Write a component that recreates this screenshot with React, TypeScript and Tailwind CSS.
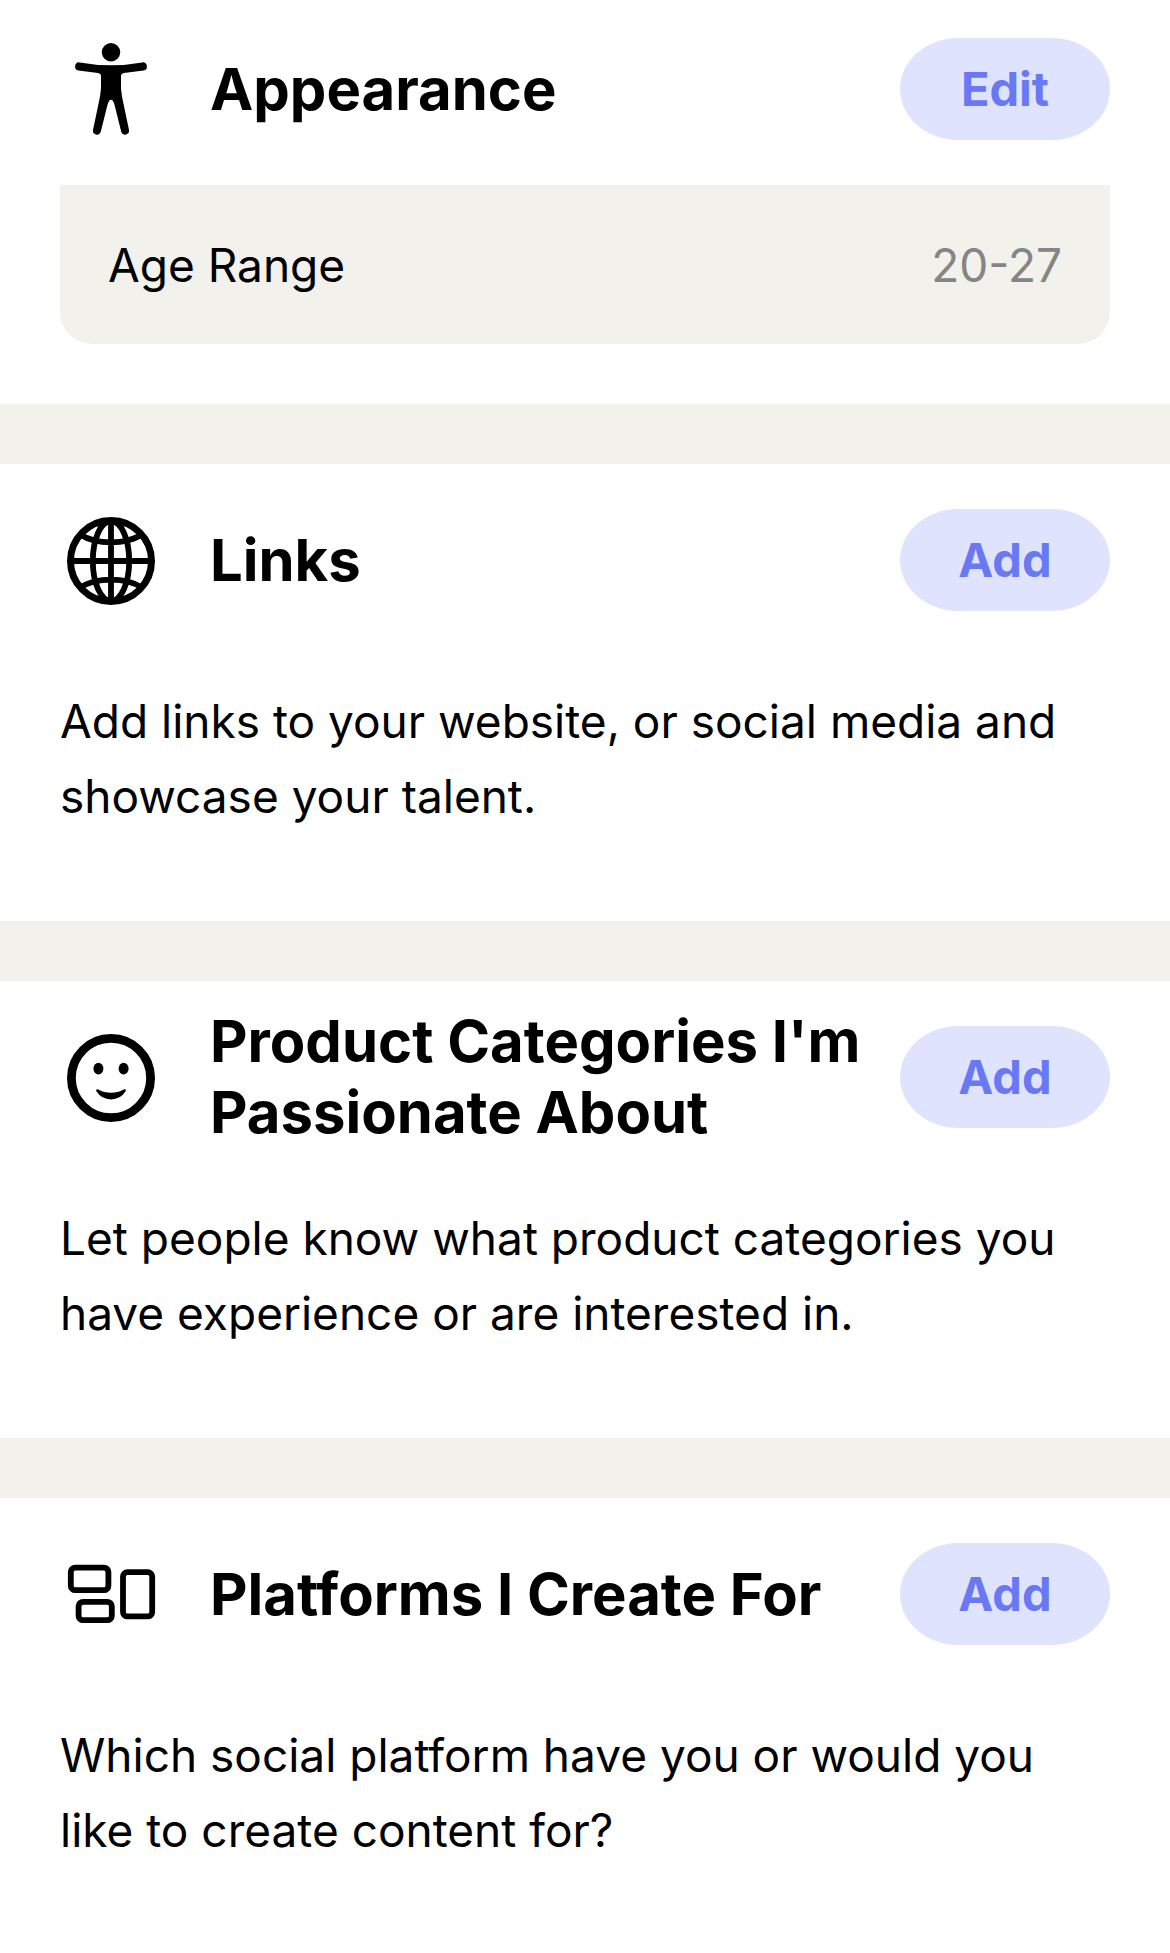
import type { ReactNode } from 'react'

interface SectionProps {
  icon: ReactNode
  title: string
  text: string
}

function PersonIcon() {
  return (
    <svg viewBox="0 0 102 102" className="size-[102px] shrink-0" fill="currentColor" aria-hidden="true">
      <circle cx="51" cy="14.2" r="9.2" />
      <path d="M19.6 24.4Q35 27.2 51 27.2T82.4 24.4A4.1 4.1 0 0 1 83.6 32.5L64 35.1Q61 35.6 61 38.5V48Q61 53 62.5 61L69 92A4 4 0 0 1 61.3 94L54.3 66Q53 61.7 51 61.7T47.7 66L40.7 94A4 4 0 0 1 33 92L39.5 61Q41 53 41 48V38.5Q41 35.6 38 35.1L18.4 32.5A4.1 4.1 0 0 1 19.6 24.4Z" />
    </svg>
  )
}

function GlobeIcon() {
  return (
    <svg viewBox="0 -1 102 102" className="size-[102px] shrink-0" fill="none" stroke="currentColor" strokeWidth="5.8" aria-hidden="true">
      <circle cx="51" cy="51" r="40.5" strokeWidth="7" />
      <ellipse cx="51" cy="51" rx="18.2" ry="40" />
      <path d="M51 9V93M9 51H93M20 24.5C37 35 65 35 82 24.5M20 77.5C37 67 65 67 82 77.5" />
    </svg>
  )
}

function SmileIcon() {
  return (
    <svg viewBox="0 -1 102 102" className="size-[102px] shrink-0" fill="currentColor" aria-hidden="true">
      <circle cx="51" cy="51" r="39.6" fill="none" stroke="currentColor" strokeWidth="8.8" />
      <ellipse cx="38.4" cy="41.6" rx="5" ry="5.8" />
      <ellipse cx="63.6" cy="41.6" rx="5" ry="5.8" />
      <path d="M36.2 64Q35.6 61.6 38.4 62.6Q44 65.8 51 65.8T63.6 62.6Q66.4 61.6 65.8 64Q60.5 72.4 51 72.4T36.2 64Z" />
    </svg>
  )
}

function BlocksIcon() {
  return (
    <svg viewBox="0 -1 102 102" className="size-[102px] shrink-0" fill="none" stroke="currentColor" strokeWidth="5.8" aria-hidden="true">
      <rect x="10.8" y="23.6" width="37.6" height="22.6" rx="4.5" />
      <rect x="18.6" y="57.8" width="33.2" height="18.4" rx="4.5" />
      <rect x="63" y="28.2" width="29.2" height="44.2" rx="4.5" />
    </svg>
  )
}

function PillButton({ label }: { label: string }) {
  return (
    <button
      type="button"
      className="h-[102px] w-[210px] shrink-0 rounded-[58px/51px] bg-[#e0e3fd] pb-0.5 text-[47px] leading-none font-bold text-[#6979f4]"
    >
      {label}
    </button>
  )
}

function Heading({ children }: { children: string }) {
  return <h2 className="ml-12 flex-1 text-[58px] leading-[71px] font-bold">{children}</h2>
}

function Section({ icon, title, text }: SectionProps) {
  return (
    <section className="border-t-60 border-[#f2f1eb] px-[60px] pb-[87px]">
      <header className="flex min-h-48 items-center">
        {icon}
        <Heading>{title}</Heading>
        <PillButton label="Add" />
      </header>
      <p className="pt-7 text-[46px] leading-[75px]">{text}</p>
    </section>
  )
}

export default function App() {
  return (
    <main className="bg-white font-['Inter',sans-serif] text-black">
      <section className="px-[60px] pb-[60px]">
        <header className="flex min-h-[185px] items-center pb-[7px]">
          <PersonIcon />
          <Heading>Appearance</Heading>
          <PillButton label="Edit" />
        </header>
        <dl className="flex items-center justify-between rounded-b-[32px] bg-[#f2f1eb] px-12 pt-[43px] pb-[41px] text-[46px] leading-[75px]">
          <dt>Age Range</dt>
          <dd className="text-[#858587]">20-27</dd>
        </dl>
      </section>
      <Section
        icon={<GlobeIcon />}
        title="Links"
        text="Add links to your website, or social media and showcase your talent."
      />
      <Section
        icon={<SmileIcon />}
        title="Product Categories I'm Passionate About"
        text="Let people know what product categories you have experience or are interested in."
      />
      <Section
        icon={<BlocksIcon />}
        title="Platforms I Create For"
        text="Which social platform have you or would you like to create content for?"
      />
    </main>
  )
}
